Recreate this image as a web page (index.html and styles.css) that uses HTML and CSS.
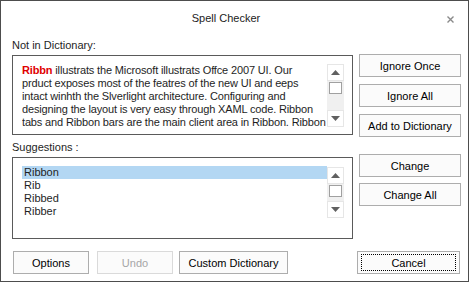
FILE: index.html
```html
<!DOCTYPE html>
<html lang="en">
<head>
    <meta charset="UTF-8">
    <title>Spell Checker</title>
    <link rel="stylesheet" href="styles.css">
</head>
<body>

    <div class="ventana">
        <div class="barra-titulo">
            <div class="titulo">Spell Checker</div>
            <svg class="cerrar" width="7" height="7" viewBox="0 0 7 7">
                <path d="M0.5 0.5 L6.5 6.5 M6.5 0.5 L0.5 6.5" stroke="#8a8a8a" stroke-width="1.4" fill="none"/>
            </svg>
        </div>

        <div class="cuerpo">
            <div class="columna-izq">
                <div class="etiqueta">Not in Dictionary:</div>
                <div class="caja caja-texto">
                    <div class="texto">
                        <span class="error">Ribbn</span> illustrats the Microsoft illustrats Offce 2007 UI. Our<br>
                        prduct exposes most of the featres of the new UI and eeps<br>
                        intact winhth the Slverlight architecture. Configuring and<br>
                        designing the layout is very easy through XAML code. Ribbon<br>
                        tabs and Ribbon bars are the main client area in Ribbon. Ribbon
                    </div>
                    <div class="scroll scroll-texto">
                        <div class="flecha"><svg width="9" height="5" viewBox="0 0 9 5"><polygon points="0,5 9,5 4.5,0" fill="#606060"/></svg></div>
                        <div class="pista"><div class="pulgar"></div></div>
                        <div class="flecha"><svg width="9" height="5" viewBox="0 0 9 5"><polygon points="0,0 9,0 4.5,5" fill="#606060"/></svg></div>
                    </div>
                </div>

                <div class="etiqueta etiqueta-sug">Suggestions :</div>
                <div class="caja caja-lista">
                    <ul class="lista">
                        <li class="seleccionado">Ribbon</li>
                        <li>Rib</li>
                        <li>Ribbed</li>
                        <li>Ribber</li>
                    </ul>
                    <div class="scroll scroll-lista">
                        <div class="flecha"><svg width="9" height="5" viewBox="0 0 9 5"><polygon points="0,5 9,5 4.5,0" fill="#606060"/></svg></div>
                        <div class="pista"><div class="pulgar"></div></div>
                        <div class="flecha"><svg width="9" height="5" viewBox="0 0 9 5"><polygon points="0,0 9,0 4.5,5" fill="#606060"/></svg></div>
                    </div>
                </div>
            </div>

            <div class="columna-der">
                <div class="grupo grupo-ignorar">
                    <button>Ignore Once</button>
                    <button>Ignore All</button>
                    <button>Add to Dictionary</button>
                </div>
                <div class="grupo grupo-cambiar">
                    <button>Change</button>
                    <button>Change All</button>
                </div>
            </div>
        </div>

        <div class="pie">
            <button class="btn-opciones">Options</button>
            <button class="btn-deshacer" disabled>Undo</button>
            <button class="btn-custom">Custom Dictionary</button>
            <button class="btn-cancelar"><span>Cancel</span></button>
        </div>
    </div>

</body>
</html>
```

FILE: styles.css
```css
body {
    margin: 0;
    font-family: "Liberation Sans", Arial, sans-serif;
    font-size: 11px;
    color: #1e1e1e;
    background-color: white;
}

.ventana {
    width: 469px;
    height: 282px;
    border: 1px solid #4d4d4d;
    box-sizing: border-box;
    background: white;
}

.barra-titulo {
    display: flex;
    align-items: flex-start;
    height: 37px;
}

.titulo {
    flex: 1;
    text-align: center;
    padding-left: 4px;
    padding-top: 10px;
    line-height: 14px;
    color: #222;
}

.cerrar {
    margin-top: 15px;
    margin-right: 14px;
}

.cuerpo {
    display: flex;
    padding-left: 11px;
}

.columna-izq {
    width: 341px;
}

.etiqueta {
    line-height: 15px;
    margin-bottom: 2px;
}

.etiqueta-sug {
    margin-top: 5px;
}

.caja {
    border: 1px solid #5a5a5a;
    box-sizing: border-box;
    display: flex;
    padding: 8px 8px 7px 9px;
}

.caja-texto {
    height: 80px;
}

.caja-lista {
    height: 82px;
}

.texto {
    flex: 1;
    line-height: 13px;
    letter-spacing: -0.15px;
    white-space: nowrap;
    overflow: hidden;
}

.error {
    color: #e00000;
    font-weight: bold;
}

.lista {
    flex: 1;
    list-style: none;
    margin: 0;
    padding: 0;
    line-height: 13px;
}

.lista li {
    padding-left: 2px;
}

.lista .seleccionado {
    background-color: #b3d7f3;
}

.scroll {
    width: 17px;
    display: flex;
    flex-direction: column;
}

.scroll-lista {
    margin-top: 1px;
    height: 51px;
}

.flecha {
    height: 17px;
    border: 1px solid #e6e6e6;
    box-sizing: border-box;
    background: white;
    display: flex;
    align-items: center;
    justify-content: center;
}

.pista {
    flex: 1;
    background-color: #f0f0f0;
    padding-top: 1px;
}

.pulgar {
    width: 13px;
    height: 12px;
    margin: 0 auto;
    border: 1px solid #a0a0a0;
    box-sizing: border-box;
    background: white;
}

.columna-der {
    margin-left: 6px;
    width: 102px;
}

.grupo {
    display: flex;
    flex-direction: column;
}

.grupo-ignorar {
    margin-top: 16px;
    gap: 7px;
}

.grupo-cambiar {
    margin-top: 17px;
    gap: 6px;
}

button {
    height: 23px;
    padding: 0;
    font-family: "Liberation Sans", Arial, sans-serif;
    font-size: 11px;
    color: #000;
    background-color: #fbfbfb;
    border: 1px solid #adadad;
    border-radius: 0;
}

button:disabled {
    color: #a6a6a6;
    border-color: #dadada;
}

.pie {
    display: flex;
    margin-top: 12px;
    padding-left: 12px;
}

.btn-opciones {
    width: 76px;
}

.btn-deshacer {
    width: 76px;
    margin-left: 8px;
}

.btn-custom {
    width: 109px;
    margin-left: 6px;
}

.btn-cancelar {
    width: 103px;
    margin-left: auto;
    margin-right: 8px;
    display: flex;
    padding: 2px 3px;
}

.btn-cancelar span {
    flex: 1;
    border: 1px dotted #000;
    display: flex;
    align-items: center;
    justify-content: center;
}
```
